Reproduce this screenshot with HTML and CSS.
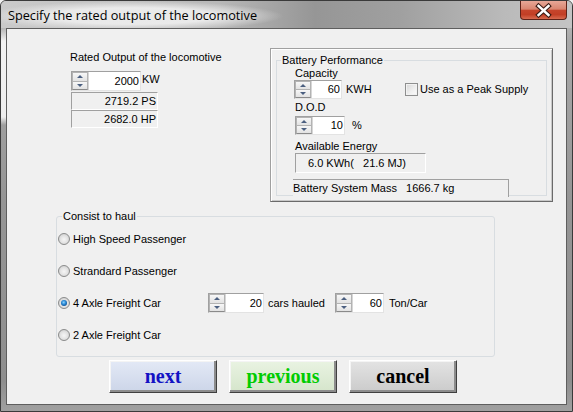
FILE: index.html
```html
<!DOCTYPE html>
<html>
<head>
<meta charset="utf-8">
<link rel="stylesheet" href="styles.css">
</head>
<body>
<div class="window">
  <div class="titlebar">
    <span class="title">Specify the rated output of the locomotive</span>
    <div class="close">
      <svg width="47" height="19" viewBox="0 0 47 19">
        <path d="M18.5 5 L28.5 14 M28.5 5 L18.5 14" stroke="#3b1c16" stroke-width="4.6" stroke-linecap="square" fill="none"/>
        <path d="M18.5 5 L28.5 14 M28.5 5 L18.5 14" stroke="#ffffff" stroke-width="2.4" stroke-linecap="square" fill="none"/>
      </svg>
    </div>
  </div>
  <div class="client">
    <div class="top-row">
      <div class="output-col">
        <div class="label">Rated Output of the locomotive</div>
        <div class="kw-row">
          <div class="spin w-kw"><span class="spin-btns"><span class="up"></span><span class="down"></span></span><span class="spin-val">2000</span></div>
          <span class="unit-kw">KW</span>
        </div>
        <div class="static ps">2719.2 PS</div>
        <div class="static hp">2682.0 HP</div>
      </div>
      <div class="battery-frame">
        <fieldset class="group battery">
          <legend>Battery Performance</legend>
          <div class="bat-body">
            <div class="label">Capacity</div>
            <div class="row">
              <div class="spin w-cap"><span class="spin-btns"><span class="up"></span><span class="down"></span></span><span class="spin-val">60</span></div>
              <span class="unit-kwh">KWH</span>
              <span class="check"></span>
              <span class="check-label">Use as a Peak Supply</span>
            </div>
            <div class="label dod">D.O.D</div>
            <div class="row dod-row">
              <div class="spin w-dod"><span class="spin-btns"><span class="up"></span><span class="down"></span></span><span class="spin-val">10</span></div>
              <span class="unit-pct">%</span>
            </div>
            <div class="label ae">Available Energy</div>
            <div class="static energy">6.0 KWh(   21.6 MJ)</div>
            <div class="mass">Battery System Mass   1666.7 kg</div>
          </div>
        </fieldset>
      </div>
    </div>
    <fieldset class="group consist">
      <legend>Consist to haul</legend>
      <div class="radio-row"><span class="radio"></span><span class="radio-label">High Speed Passenger</span></div>
      <div class="radio-row"><span class="radio"></span><span class="radio-label">Strandard Passenger</span></div>
      <div class="radio-row">
        <span class="radio checked"></span><span class="radio-label fixed">4 Axle Freight Car</span>
        <div class="spin w-cars"><span class="spin-btns"><span class="up"></span><span class="down"></span></span><span class="spin-val">20</span></div>
        <span class="unit-cars">cars hauled</span>
        <div class="spin w-ton"><span class="spin-btns"><span class="up"></span><span class="down"></span></span><span class="spin-val">60</span></div>
        <span class="unit-ton">Ton/Car</span>
      </div>
      <div class="radio-row"><span class="radio"></span><span class="radio-label">2 Axle Freight Car</span></div>
    </fieldset>
    <div class="buttons">
      <button class="btn btn-next">next</button>
      <button class="btn btn-prev">previous</button>
      <button class="btn btn-cancel">cancel</button>
    </div>
  </div>
</div>
</body>
</html>
```

FILE: styles.css
```css
html, body {
  margin: 0;
  padding: 0;
  background: #f0f0f0;
}
body {
  font-family: "Liberation Sans", Arial, sans-serif;
  font-size: 11px;
  color: #000;
}
.window {
  width: 573px;
  height: 412px;
  box-sizing: border-box;
  border: 1px solid #3a3a3a;
  border-radius: 6px 6px 0 0;
  padding: 0 5px 6px 5px;
  display: flex;
  flex-direction: column;
  background:
    linear-gradient(to bottom, rgba(255,255,255,0) 26px, #f2f2f2 40px, #eeeeee 116px, rgba(255,255,255,0) 124px) 0 0 / 5px 100% no-repeat,
    linear-gradient(to bottom, #c6c6c6 0, #a8a8a8 40px, #959595 200px, #8e8e8e 380px, #a0a0a0 100%);
}
.titlebar {
  height: 27px;
  margin: 0 -5px;
  padding: 0 5px;
  display: flex;
  justify-content: space-between;
  align-items: flex-start;
  border-radius: 5px 5px 0 0;
  background:
    radial-gradient(ellipse 150px 15px at 132px 15px, rgba(236,236,236,0.95) 55%, rgba(236,236,236,0) 100%),
    linear-gradient(to right, #cacaca 0, #b8b8b8 38%, #969696 55%, #a0a0a0 70%, #bababa 88%, #c4c4c4 100%);
}
.title {
  font-family: "Open Sans", "Noto Sans", sans-serif;
  font-size: 12.7px;
  line-height: 16px;
  margin-top: 6px;
  padding-left: 2px;
  color: #000;
}
.close {
  width: 47px;
  height: 19px;
  box-sizing: border-box;
  border: 1px solid #5e2218;
  border-top: none;
  border-radius: 0 0 4px 4px;
  background: linear-gradient(to bottom, #e7a797 0, #d98570 45%, #c6452c 52%, #c23e25 75%, #d86a4f 100%);
  display: flex;
  align-items: center;
  justify-content: center;
  overflow: hidden;
}
.close svg {
  display: block;
  flex: none;
}
.client {
  flex: 1;
  border: 1px solid #5e5e5e;
  background: #f0f0f0;
}
.top-row {
  display: flex;
  align-items: flex-start;
  margin-top: 19px;
}
.output-col {
  margin-left: 63px;
  width: 200px;
  padding-top: 3px;
}
.label {
  line-height: 13px;
  white-space: nowrap;
}
.kw-row {
  display: flex;
  align-items: flex-start;
  margin-top: 7px;
  margin-left: 1px;
}
.unit-kw {
  line-height: 13px;
  margin-top: 2px;
  margin-left: 1px;
}
.spin {
  display: flex;
  box-sizing: border-box;
  border: 1px solid;
  border-color: #a0a0a0 #e3e3e3 #e3e3e3 #a0a0a0;
  background: #fff;
  flex: none;
}
.spin-btns {
  width: 16px;
  display: flex;
  flex-direction: column;
  flex: none;
  border-right: 1px solid #d6d6d6;
}
.spin-btns span {
  flex: 1;
  box-sizing: border-box;
  border: 1px solid #b3b3b3;
  background: linear-gradient(to bottom, #f7f7f7, #e2e2e2);
  display: flex;
  align-items: center;
  justify-content: center;
}
.spin-btns .down {
  border-top: none;
  border-bottom-color: #8a8a8a;
}
.spin-btns .up::before {
  content: "";
  border-left: 3px solid transparent;
  border-right: 3px solid transparent;
  border-bottom: 3px solid #4b5f80;
}
.spin-btns .down::before {
  content: "";
  border-left: 3px solid transparent;
  border-right: 3px solid transparent;
  border-top: 3px solid #4b5f80;
}
.spin-val {
  flex: 1;
  text-align: right;
  padding-right: 1px;
  align-self: center;
  line-height: 13px;
}
.w-kw { width: 70px; height: 20px; }
.w-cap { width: 48px; height: 19px; margin-left: -1px; }
.w-dod { width: 50px; height: 19px; }
.w-cars { width: 56px; height: 20px; }
.w-ton { width: 49px; height: 20px; }
.static {
  box-sizing: border-box;
  border: 1px solid;
  border-color: #a0a0a0 #ffffff #ffffff #a0a0a0;
  white-space: pre;
}
.ps, .hp {
  width: 87px;
  height: 18px;
  margin-left: 1px;
  text-align: right;
  padding-right: 1px;
  line-height: 16px;
}
.ps { margin-top: 1px; }
.battery-frame {
  width: 283px;
  height: 154px;
  box-sizing: border-box;
  border: 1px solid;
  border-color: #a0a0a0 #6a6a6a #6a6a6a #a0a0a0;
  box-shadow: inset 1px 1px 0 #ffffff, inset -1px -1px 0 #c8c8c8;
  padding: 5px;
}
.group {
  margin: 0;
  padding: 0;
  border: 1px solid #d8dde1;
  min-width: 0;
}
.group legend {
  padding: 0 1px;
  line-height: 13px;
  background: #f0f0f0;
}
.battery legend {
  margin-left: 4px;
}
.bat-body {
  padding-left: 18px;
}
.row {
  display: flex;
  align-items: center;
  height: 19px;
}
.unit-kwh {
  width: 59px;
  margin-left: 4px;
  line-height: 13px;
}
.check {
  width: 13px;
  height: 13px;
  box-sizing: border-box;
  border: 1px solid #8e8f8f;
  background: linear-gradient(135deg, #d6d6d6 0, #f0f0f0 60%, #fbfbfb 100%);
  box-shadow: inset 0 0 0 1px #f2f2f2;
  flex: none;
}
.check-label {
  margin-left: 2px;
  line-height: 13px;
  white-space: nowrap;
}
.dod { margin-top: 2px; }
.dod-row { margin-top: 2px; }
.unit-pct {
  margin-left: 7px;
  line-height: 13px;
}
.ae { margin-top: 5px; }
.energy {
  width: 131px;
  height: 20px;
  padding-left: 12px;
  line-height: 18px;
}
.mass {
  box-sizing: border-box;
  width: 216px;
  height: 18px;
  margin-top: 6px;
  margin-left: -2px;
  margin-bottom: -2px;
  border-top: 1px solid #a0a0a0;
  border-right: 1px solid #a0a0a0;
  background: #f0f0f0;
  line-height: 16px;
  white-space: pre;
  position: relative;
}
.consist {
  margin-top: 8px;
  margin-left: 49px;
  width: 439px;
  box-sizing: border-box;
  border-radius: 3px;
  padding: 0 0 5px 0;
}
.consist legend {
  margin-left: 5px;
}
.radio-row {
  height: 32px;
  display: flex;
  align-items: center;
  padding-left: 1px;
}
.radio {
  width: 12px;
  height: 12px;
  box-sizing: border-box;
  border-radius: 50%;
  border: 1px solid #8a8b8b;
  background: radial-gradient(circle at 50% 55%, #f6f6f6 0, #e4e4e4 45%, #c6c6c6 100%);
  flex: none;
  position: relative;
}
.radio.checked::after {
  content: "";
  position: absolute;
  left: 2px;
  top: 2px;
  width: 6px;
  height: 6px;
  border-radius: 50%;
  background: radial-gradient(circle at 45% 40%, #8fd4ff 0, #2a8ad6 40%, #0d4a8c 80%, #0a3668 100%);
}
.radio-label {
  margin-left: 3px;
  line-height: 13px;
  white-space: nowrap;
}
.radio-label.fixed {
  width: 135px;
  flex: none;
}
.unit-cars {
  width: 67px;
  margin-left: 4px;
  line-height: 13px;
  white-space: nowrap;
}
.unit-ton {
  margin-left: 5px;
  line-height: 13px;
}
.buttons {
  display: flex;
  gap: 12px;
  margin-top: 3px;
  margin-left: 102px;
}
.btn {
  width: 108px;
  height: 33px;
  box-sizing: border-box;
  border: 1px solid;
  border-color: #ffffff #3f3f3f #3f3f3f #ffffff;
  box-shadow: inset -2px -2px 0 #8c8c8c, inset 1px 1px 0 #f4f4f4;
  font-family: "Liberation Serif", "Times New Roman", serif;
  font-weight: bold;
  font-size: 20px;
  line-height: 24px;
  padding: 0 0 1px 0;
  margin: 0;
}
.btn-next {
  color: #1212c4;
  background: linear-gradient(to bottom, #e3e9f6, #ccd5e8);
}
.btn-prev {
  color: #00cc00;
  background: linear-gradient(to bottom, #e9f3e2, #d5e5cb);
}
.btn-cancel {
  color: #000000;
  background: linear-gradient(to bottom, #e3e3e3, #cbcbcb);
}
```
